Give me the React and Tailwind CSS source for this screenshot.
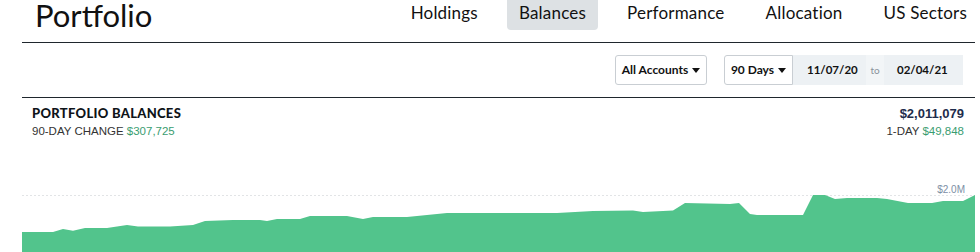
import React from 'react';

const tabs = ['Holdings', 'Balances', 'Performance', 'Allocation', 'US Sectors'];

const Caret = () => (
  <svg width="8" height="5" viewBox="0 0 8 5" className="ml-[4px]">
    <path d="M0 0 L8 0 L4 5 Z" fill="#111" />
  </svg>
);

const chartPath =
  'M22,252 L22,232 L53,232 L63,229 L73,230.7 L85,228 L107,228 L127,225 L138,226.5 L170,226.5 L193,225 L205,221 L233,220 L260,220 L267,221 L277,219 L300,219 L310,216 L347,216 L363,219 L373,217 L407,217 L447,213 L557,213 L593,211 L633,210.5 L643,212 L673,210.5 L685,203 L730,204 L739,203 L750,214 L757,215 L803,215 L813,195 L825,195 L835,199 L847,198 L877,198 L887,199 L908,203 L932,203 L943,201 L963,201 L975,195 L975,252 Z';

export default function App() {
  return (
    <div className="w-[980px] h-[252px] overflow-hidden bg-white pl-[22px] pr-[5px] font-['Lato',sans-serif] text-[#111]">
      {/* top bar */}
      <div className="flex justify-between items-start h-[43px] border-b border-[#1f272d]">
        <h1 className="ml-[13px] -mt-[1px] text-[31px] leading-[32px] font-normal">Portfolio</h1>
        <nav className="flex gap-[17px] -mr-[4px]">
          {tabs.map((t) => (
            <div
              key={t}
              className={`h-[30px] px-3 pt-[4px] text-[17px] leading-[17px] tracking-[0.2px] rounded-b-[4px] ${
                t === 'Balances' ? 'bg-[#dde1e4]' : ''
              }`}
            >
              {t}
            </div>
          ))}
        </nav>
      </div>

      {/* filters */}
      <div className="flex justify-end items-center h-[55px] pr-[12px] border-b border-[#1f272d] text-[12px] font-bold">
        <button className="flex items-center justify-center w-[92px] h-[30px] border border-[#c9ced3] rounded-[3px] mr-[17px]">
          All Accounts
          <Caret />
        </button>
        <button className="flex items-center justify-center w-[69px] h-[30px] border border-[#c9ced3] rounded-l-[3px]">
          90 Days
          <Caret />
        </button>
        <div className="flex items-center h-[30px] w-[170px] bg-[#edf1f4] text-[11.5px]">
          <span className="w-[73px] pl-[14px]">11/07/20</span>
          <span className="w-[18px] h-full flex items-center justify-center bg-[#f2f5f7] text-[10px] font-normal text-[#8a939b]">to</span>
          <span className="pl-[13px]">02/04/21</span>
        </div>
      </div>

      {/* summary */}
      <div className="flex justify-between pl-[10px] pr-[11px] pt-[8px] h-[42px]">
        <div>
          <div className="text-[13px] leading-[15px] font-black tracking-[0.3px] text-[#0f1419]">PORTFOLIO BALANCES</div>
          <div className="text-[11.5px] leading-[14px] mt-[3px] font-['Liberation_Sans',sans-serif] text-[#333]">
            90-DAY CHANGE <span className="text-[#3a9d71]">$307,725</span>
          </div>
        </div>
        <div className="text-right">
          <div className="text-[13px] leading-[15px] font-bold font-['Liberation_Sans',sans-serif] text-[#1e2c4c]">$2,011,079</div>
          <div className="text-[11.5px] leading-[14px] mt-[3px] font-['Liberation_Sans',sans-serif] text-[#333]">
            1-DAY <span className="text-[#3a9d71]">$49,848</span>
          </div>
        </div>
      </div>

      {/* chart */}
      <div className="relative h-[112px]">
        <svg width="953" height="112" viewBox="22 140 953 112" className="block">
          <line x1="22" y1="195.5" x2="975" y2="195.5" stroke="#e2e4e6" strokeWidth="1" strokeDasharray="2 2" />
          <path d={chartPath} fill="#52c48c" />
        </svg>
        <span className="absolute right-[10px] top-[45px] text-[10px] leading-[10px] font-['Liberation_Sans',sans-serif] text-[#7d8fa5]">
          $2.0M
        </span>
      </div>
    </div>
  );
}
